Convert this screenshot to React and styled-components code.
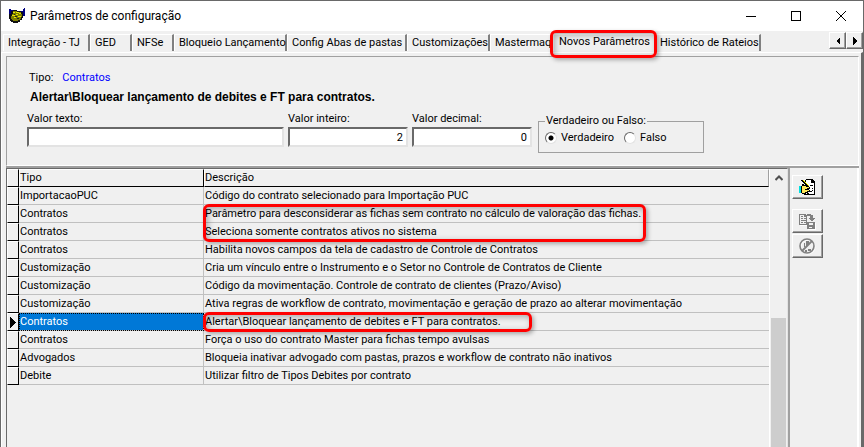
import React from 'react';
import styled, { createGlobalStyle } from 'styled-components';

const TABS = [
  { id: 0, name: 'Integração - TJ', width: 87 },
  { id: 1, name: 'GED', width: 42 },
  { id: 2, name: 'NFSe', width: 42 },
  { id: 3, name: 'Bloqueio Lançamento', width: 113 },
  { id: 4, name: 'Config Abas de pastas', width: 120 },
  { id: 5, name: 'Customizações', width: 83 },
  { id: 6, name: 'Mastermaq', width: 63 },
  { id: 7, name: 'Novos Parâmetros', width: 102, active: true },
  { id: 8, name: 'Histórico de Rateios', width: 106 },
];

const ROWS = [
  { id: 0, tipo: 'ImportacaoPUC', desc: 'Código do contrato selecionado para Importação PUC' },
  {
    id: 1,
    tipo: 'Contratos',
    desc: 'Parâmetro para desconsiderar as fichas sem contrato no cálculo de valoração das fichas.',
    mark: { width: 443, rows: 2 },
  },
  { id: 2, tipo: 'Contratos', desc: 'Seleciona somente contratos ativos no sistema' },
  { id: 3, tipo: 'Contratos', desc: 'Habilita novos campos da tela de cadastro de Controle de Contratos' },
  { id: 4, tipo: 'Customização', desc: 'Cria um vínculo entre o Instrumento e o Setor no Controle de Contratos de Cliente' },
  { id: 5, tipo: 'Customização', desc: 'Código da movimentação. Controle de contrato de clientes (Prazo/Aviso)' },
  {
    id: 6,
    tipo: 'Customização',
    desc: 'Ativa regras de workflow de contrato, movimentação e geração de prazo ao alterar movimentação',
  },
  {
    id: 7,
    tipo: 'Contratos',
    desc: 'Alertar\\Bloquear lançamento de debites e FT para contratos.',
    selected: true,
    mark: { width: 329, rows: 1 },
  },
  { id: 8, tipo: 'Contratos', desc: 'Força o uso do contrato Master para fichas tempo avulsas' },
  { id: 9, tipo: 'Advogados', desc: 'Bloqueia inativar advogado com pastas, prazos e workflow de contrato não inativos' },
  { id: 10, tipo: 'Debite', desc: 'Utilizar filtro de Tipos Debites por contrato' },
];

const HandshakeIcon = () => (
  <svg width="16" height="16" viewBox="0 0 16 16" shapeRendering="crispEdges">
    <path d="M0 1h2v1h2v2h-1v5h-3zM16 0v8h-2v-3h-2v-2h2v-2h1v-1z" fill="#000080" />
    <path d="M4 2h4v1h4v1h2v6h-1v2h-2v2h-2v1h-5v-1h-2v-1h-1v-2h-1v-5h2v-3h1z" fill="#111" />
    <path d="M4 3h4v1h4v2h1v3h-1v2h-1v1h-8v-1h-1v-3h1v-2h1z" fill="#808000" />
    <path d="M4 4h2v1h-2zM7 4h3v1h-3zM10 5h2v1h-2zM3 7h3v1h-3zM7 6h2v1h-2zM9 8h3v1h-3zM5 9h2v1h-2z" fill="#e6e600" />
    <path d="M4 12h5v1h-5z" fill="#808000" />
    <path d="M6 8h2v1h-2zM8 10h2v1h-2zM5 6h1v1h-1z" fill="#222" />
  </svg>
);

const EditIcon = () => (
  <svg width="17" height="17" viewBox="0 0 17 17" shapeRendering="crispEdges">
    <path d="M7 0h7v1h1v1h1v14h-11v-3h1v-12h1z" fill="#000" />
    <path d="M7 1h5v3h3v11h-9v-3h1z" fill="#fff" />
    <path d="M13 2h1v1h1v1h-2zM11 6h3v1h-3zM13 9h1v1h-1zM11 12h2v1h-2zM13 11h1v1h-1zM8 14h2v1h-2z" fill="#000" />
    <path d="M2 1h2v1h1v1h1v1h1v1h1v1h1v1h1v1h-2v-1h-1v-1h-1v-1h-1v-1h-1v-1h-1v-1h-1z" fill="#000" />
    <path d="M4 1h1v1h1v1h1v1h1v1h1v1h1v1h-1v-1h-1v-1h-1v-1h-1v-1h-1v-1h-1z" fill="#ff0" />
    <path d="M3 5h2v1h2v1h3v1h1v2h-1v1h1v2h-2v1h-2v1h-4v-1h-1v-7h1z" fill="#000" />
    <path d="M3 7h4v1h3v1h-2v1h-2v1h4v1h-2v1h-2v1h-3z" fill="#ffe95a" />
    <path d="M0 7h2v7h-2z" fill="#00e0e0" />
  </svg>
);

const SaveIcon = () => (
  <svg width="17" height="17" viewBox="0 0 17 17" shapeRendering="crispEdges">
    <path d="M16 10h1v7h-8v-1h7zM1 12h7v1h-7z" fill="#fff" />
    <path d="M0 1h7v1h1v10h-8zM1 2v9h6v-7h-2v-2z" fill="#808080" fillRule="evenodd" />
    <path d="M2 3h2v1h-2zM2 5h2v1h-2zM5 5h2v1h-2zM2 7h5v1h-5zM2 9h2v1h-2zM5 9h2v1h-2z" fill="#808080" />
    <path d="M8 1h4v1h2v3h2v1h-1v1h-1v1h-2v-1h-1v-1h-1v-1h1v-2h-3z" fill="#808080" />
    <path d="M8 9h8v7h-8zM10 10v2h4v-2zM10 14v1h3v-1z" fill="#808080" fillRule="evenodd" />
  </svg>
);

const CancelIcon = () => (
  <svg width="17" height="17" viewBox="0 0 17 17">
    <circle cx="9" cy="9" r="7" fill="none" stroke="#fff" />
    <circle cx="8" cy="8" r="7" fill="none" stroke="#808080" strokeWidth="1.6" />
    <path d="M13 3L3 13" stroke="#808080" strokeWidth="1.8" />
    <path d="M7 3h3v3l-2 2h-1zM5 5h1v4h-1zM9 11h3v2h-3zM6 12h2v2h-2z" fill="#808080" />
  </svg>
);

const App = () => {
  return (
    <Window>
      <GlobalStyle />
      <TitleBar>
        <HandshakeIcon />
        <Title>Parâmetros de configuração</Title>
        <WindowButton aria-label="Minimizar">
          <svg width="10" height="10" shapeRendering="crispEdges">
            <path d="M0 5.5h10" stroke="#000" />
          </svg>
        </WindowButton>
        <WindowButton aria-label="Maximizar">
          <svg width="10" height="10" shapeRendering="crispEdges">
            <path d="M.5 .5h9v9h-9z" stroke="#000" fill="none" />
          </svg>
        </WindowButton>
        <WindowButton aria-label="Fechar">
          <svg width="10" height="10">
            <path d="M0 0l10 10M10 0L0 10" stroke="#000" />
          </svg>
        </WindowButton>
      </TitleBar>

      <TabBar>
        <TabList role="tablist">
          {TABS.map((tab) => (
            <Tab key={tab.id} role="tab" aria-selected={!!tab.active} $width={tab.width} $active={tab.active}>
              {tab.name}
              {tab.active && <TabMark />}
            </Tab>
          ))}
        </TabList>
        <ScrollTab aria-label="Abas anteriores">
          <svg width="4" height="8" shapeRendering="crispEdges">
            <path d="M4 0v8L0 4z" />
          </svg>
        </ScrollTab>
        <ScrollTab aria-label="Próximas abas">
          <svg width="4" height="8" shapeRendering="crispEdges">
            <path d="M0 0v8L4 4z" />
          </svg>
        </ScrollTab>
      </TabBar>

      <Page>
        <FormPanel>
          <TypeLine>
            <span>Tipo:</span>
            <TypeName>Contratos</TypeName>
          </TypeLine>
          <ParamName>Alertar\Bloquear lançamento de debites e FT para contratos.</ParamName>
          <Fields>
            <Field $width={257}>
              Valor texto:
              <TextBox type="text" defaultValue="" />
            </Field>
            <Field $width={120}>
              Valor inteiro:
              <TextBox type="text" defaultValue="2" $number />
            </Field>
            <Field $width={120}>
              Valor decimal:
              <TextBox type="text" defaultValue="0" $number />
            </Field>
            <Group>
              <Legend>Verdadeiro ou Falso:</Legend>
              <Option>
                <Radio type="radio" name="valor" defaultChecked />
                Verdadeiro
              </Option>
              <Option>
                <Radio type="radio" name="valor" />
                Falso
              </Option>
            </Group>
          </Fields>
        </FormPanel>

        <Body>
          <Grid>
            <TableArea>
              <Table>
                <colgroup>
                  <col width="12" />
                  <col width="185" />
                  <col />
                </colgroup>
                <thead>
                  <tr>
                    <HeadCell />
                    <HeadCell>Tipo</HeadCell>
                    <HeadCell>Descrição</HeadCell>
                  </tr>
                </thead>
                <tbody>
                  {ROWS.map((row) => (
                    <tr key={row.id}>
                      <Indicator>
                        {row.selected && (
                          <svg width="6" height="11" shapeRendering="crispEdges">
                            <path d="M0 0v11L6 5.5z" />
                          </svg>
                        )}
                      </Indicator>
                      <Cell $selected={row.selected}>{row.tipo}</Cell>
                      <Cell>
                        {row.desc}
                        {row.mark && <RowMark $width={row.mark.width} $rows={row.mark.rows} />}
                      </Cell>
                    </tr>
                  ))}
                </tbody>
              </Table>
            </TableArea>
            <ScrollBar>
              <ScrollUp aria-label="Rolar para cima">
                <svg width="8" height="6">
                  <path d="M0.5 5L4 1.5L7.5 5" stroke="#505050" strokeWidth="2" fill="none" />
                </svg>
              </ScrollUp>
              <Thumb />
            </ScrollBar>
          </Grid>
          <Tools>
            <ToolButton aria-label="Editar">
              <EditIcon />
            </ToolButton>
            <ToolGroup>
              <ToolButton aria-label="Salvar" disabled>
                <SaveIcon />
              </ToolButton>
              <ToolButton aria-label="Cancelar" disabled>
                <CancelIcon />
              </ToolButton>
            </ToolGroup>
          </Tools>
        </Body>
      </Page>
    </Window>
  );
};

export default App;

const GlobalStyle = createGlobalStyle`
  * {
    box-sizing: border-box;
  }

  body {
    margin: 0;
    color: #000;
    background: #f0f0f0;
    font: 11px/14px Roboto, 'Noto Sans', sans-serif;
  }

  button,
  input {
    font: inherit;
    color: inherit;
  }

  svg {
    display: block;
  }
`;

const Window = styled.div`
  display: flex;
  flex-direction: column;
  height: 100vh;
  overflow: hidden;
  border: 1px solid #696969;
  border-bottom: none;
`;

const TitleBar = styled.header`
  display: flex;
  align-items: center;
  height: 30px;
  padding-left: 8px;
  background: #fff;
`;

const Title = styled.h1`
  flex: 1;
  margin: 0 0 0 5px;
  font: 12px/16px Roboto, 'Noto Sans', sans-serif;
`;

const WindowButton = styled.button`
  display: flex;
  align-items: center;
  justify-content: center;
  width: 45px;
  height: 30px;
  padding: 0;
  border: none;
  background: none;
`;

const TabBar = styled.div`
  display: flex;
  align-items: flex-start;
  height: 21px;
  padding-top: 1px;
`;

const TabList = styled.div`
  display: flex;
  flex: 1;
  padding: 2px 0 0 2px;
`;

const Tab = styled.button`
  position: relative;
  flex: none;
  width: ${(props) => props.$width}px;
  height: 17px;
  padding: ${(props) => (props.$active ? '0 0 4px 5px' : '0 0 0 4px')};
  border: 1px solid #fff;
  border-width: 1px 0 0 1px;
  border-right: 2px solid ${(props) => (props.$active ? '#f0f0f0' : '#808080')};
  background: #f0f0f0;
  text-align: left;
  white-space: nowrap;
`;

const Mark = styled.span`
  position: absolute;
  z-index: 1;
  border: 3px solid #f00;
  border-radius: 6px;
  box-shadow: 2px 2px 4px rgba(0, 0, 0, 0.3), inset 2px 2px 6px rgba(0, 0, 0, 0.3);
  pointer-events: none;
`;

const TabMark = styled(Mark)`
  inset: -5px -4px -7px -4px;
`;

const ScrollTab = styled.button`
  display: flex;
  align-items: center;
  justify-content: center;
  width: 17px;
  height: 17px;
  padding: 0;
  border: 1px solid;
  border-color: #fff #696969 #696969 #fff;
  background: #f0f0f0;
  box-shadow: inset -1px -1px #a0a0a0;
`;

const Page = styled.main`
  display: flex;
  flex: 1;
  flex-direction: column;
  min-height: 0;
  padding: 3px 2px 0 4px;
  border: 1px solid #fff;
  border-right: 2px solid #696969;
  border-bottom: none;
`;

const FormPanel = styled.section`
  padding: 14px 20px 18px;
  border: 1px solid;
  border-color: #a0a0a0 #fff #fff #a0a0a0;
`;

const TypeLine = styled.div`
  display: flex;
  gap: 9px;
  padding-left: 2px;
`;

const TypeName = styled.span`
  color: #00f;
`;

const ParamName = styled.h2`
  margin: 5px 0 8px 3px;
  font: bold 12px/14px 'Liberation Sans', Arial, sans-serif;
`;

const Fields = styled.div`
  display: flex;
  align-items: flex-end;
  gap: 4px;
`;

const Field = styled.label`
  display: flex;
  flex-direction: column;
  gap: 1px;
  width: ${(props) => props.$width}px;
`;

const TextBox = styled.input`
  width: 100%;
  height: 20px;
  padding: 0 3px;
  border: 2px solid;
  border-color: #696969 #e3e3e3 #e3e3e3 #696969;
  border-radius: 0;
  outline: none;
  background: #fff;
  text-align: ${(props) => (props.$number ? 'right' : 'left')};
`;

const Group = styled.fieldset`
  display: flex;
  gap: 10px;
  width: 166px;
  height: 39px;
  margin: 0 0 -6px 2px;
  padding: 3px 6px 0;
  border: 1px solid #a0a0a0;
`;

const Legend = styled.legend`
  padding: 0 1px;
`;

const Option = styled.label`
  display: flex;
  align-items: flex-start;
  gap: 4px;
`;

const Radio = styled.input`
  appearance: none;
  width: 12px;
  height: 12px;
  margin: 1px 0 0;
  border: 1px solid;
  border-color: #696969 #e3e3e3 #e3e3e3 #696969;
  border-radius: 50%;
  background: #fff;

  &:checked {
    background: radial-gradient(circle, #000 2px, #fff 3px);
  }
`;

const Body = styled.div`
  display: flex;
  flex: 1;
  min-height: 0;
  border-top: 2px solid #a0a0a0;
`;

const Grid = styled.section`
  display: flex;
  flex: 1;
  border: 1px solid #696969;
  border-right-color: #e3e3e3;
  border-bottom: none;
`;

const TableArea = styled.div`
  flex: 1;
  overflow: hidden;
`;

const Table = styled.table`
  width: 100%;
  table-layout: fixed;
  border-spacing: 0;
`;

const HeadCell = styled.th`
  height: 18px;
  padding: 0;
  border: 1px solid #000;
  border-top-color: #fff;
  border-left-color: #fff;
  font-weight: normal;
  text-align: left;

  &:last-child {
    border-right-color: #a0a0a0;
  }
`;

const Indicator = styled.td`
  height: 18px;
  padding: 0 0 0 2px;
  border: 1px solid #000;
  border-top-color: #fff;
  border-left-color: #fff;
`;

const Cell = styled.td`
  position: relative;
  height: 18px;
  padding: 0 0 0 1px;
  border: 1px solid #c0c0c0;
  border-width: 0 1px 1px 0;
  white-space: nowrap;
  color: ${(props) => (props.$selected ? '#fff' : 'inherit')};
  background: ${(props) => (props.$selected ? '#0078d7' : 'none')};
  outline: ${(props) => (props.$selected ? '1px dotted #000' : 'none')};
  outline-offset: -1px;

  &:last-child {
    border-right: none;
  }
`;

const RowMark = styled(Mark)`
  top: -1px;
  left: -1px;
  width: ${(props) => props.$width}px;
  height: ${(props) => props.$rows * 18 + 2}px;
`;

const ScrollBar = styled.div`
  display: flex;
  flex-direction: column;
  width: 18px;
  padding: 0 1px;
  border-left: 1px solid #fff;
`;

const ScrollUp = styled.button`
  display: flex;
  align-items: center;
  justify-content: center;
  height: 17px;
  padding: 0;
  border: none;
  background: none;
`;

const Thumb = styled.div`
  flex: 1;
  margin-top: 132px;
  background: #cdcdcd;
`;

const Tools = styled.aside`
  width: 71px;
  padding: 7px 0 0 2px;
  border-left: 2px solid #a0a0a0;
  border-right: 2px solid #fff;
`;

const ToolGroup = styled.div`
  margin-top: 10px;
`;

const ToolButton = styled.button`
  display: flex;
  align-items: center;
  justify-content: center;
  width: 31px;
  height: 24px;
  margin-bottom: 1px;
  padding: 0;
  border: 1px solid;
  border-color: #fff #696969 #696969 #fff;
  background: #f0f0f0;
  box-shadow: inset -1px -1px #a0a0a0;
`;
